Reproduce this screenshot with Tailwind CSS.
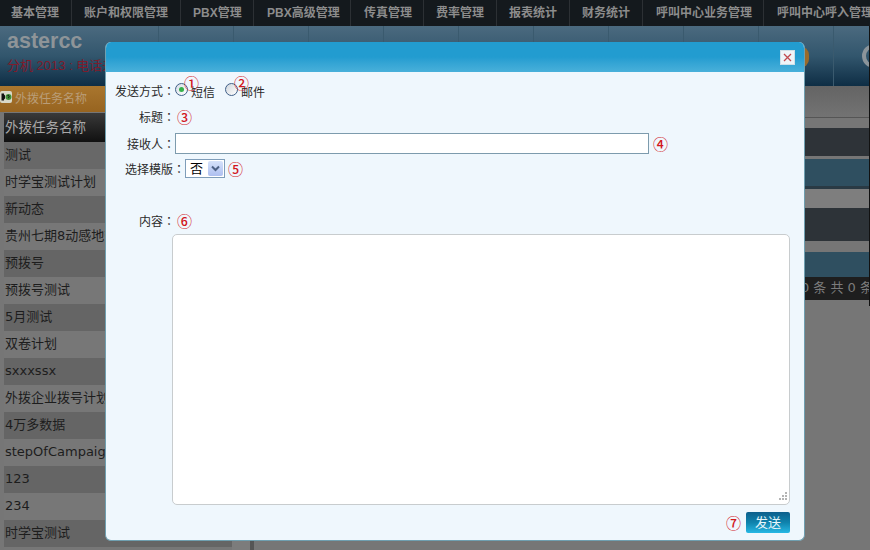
<!DOCTYPE html>
<html>
<head>
<meta charset="utf-8">
<script src="https://cdn.jsdelivr.net/npm/@tailwindcss/browser@4"></script>
</head>
<body class="m-0">
<div class="relative w-[870px] h-[550px] overflow-hidden bg-[#767676] font-['DejaVu_Sans','Noto_Sans_CJK_SC',sans-serif] text-[13px]">
  <!-- top nav -->
  <nav class="flex h-[26px] bg-[#14191d] text-[12px] font-bold text-[#8c8c8c] leading-[26px] whitespace-nowrap font-['Liberation_Sans','Noto_Sans_CJK_SC',sans-serif]">
    <div class="w-[72px] shrink-0 pl-[11px] border-r border-[#2c3034]">基本管理</div>
    <div class="w-[109px] shrink-0 pl-[12px] border-r border-[#2c3034]">账户和权限管理</div>
    <div class="w-[73px] shrink-0 pl-[12px] border-r border-[#2c3034]">PBX管理</div>
    <div class="w-[97px] shrink-0 pl-[13px] border-r border-[#2c3034]">PBX高级管理</div>
    <div class="w-[73px] shrink-0 pl-[13px] border-r border-[#2c3034]">传真管理</div>
    <div class="w-[73px] shrink-0 pl-[12px] border-r border-[#2c3034]">费率管理</div>
    <div class="w-[73px] shrink-0 pl-[12px] border-r border-[#2c3034]">报表统计</div>
    <div class="w-[73px] shrink-0 pl-[12px] border-r border-[#2c3034]">财务统计</div>
    <div class="w-[121px] shrink-0 pl-[13px] border-r border-[#2c3034]">呼叫中心业务管理</div>
    <div class="shrink-0 pl-[13px]">呼叫中心呼入管理</div>
  </nav>

  <!-- dimmed header -->
  <header class="relative flex h-[60px] bg-gradient-to-b from-[#4b6a7f] via-[#32566d] to-[#0e2e45]">
    <div class="w-[159px] shrink-0 pl-[7px] overflow-hidden whitespace-nowrap border-r border-[#3a5a6e] font-['Liberation_Sans','Noto_Sans_CJK_SC',sans-serif]">
      <div class="text-[21.500px] font-bold leading-[28px] mt-[1px] text-[#8e9498]">astercc</div>
      <div class="text-[13px] leading-[20px] mt-[1px] text-[#7e1c2c]">分机 2013 : 电话未注册</div>
    </div>
    <div class="w-[75px] shrink-0 border-r border-[#3a5a6e]"></div>
    <div class="w-[75px] shrink-0 border-r border-[#3a5a6e]"></div>
    <div class="w-[75px] shrink-0 border-r border-[#3a5a6e]"></div>
    <div class="w-[75px] shrink-0 border-r border-[#3a5a6e]"></div>
    <div class="w-[75px] shrink-0 border-r border-[#3a5a6e]"></div>
    <div class="w-[75px] shrink-0 border-r border-[#3a5a6e]"></div>
    <div class="w-[75px] shrink-0 border-r border-[#3a5a6e]"></div>
    <div class="w-[75px] shrink-0 border-r border-[#3a5a6e]"></div>
    <div class="w-[75px] shrink-0 border-r border-[#3a5a6e]"></div>
    <div class="absolute left-[800px] top-[20px] w-[9px] h-[22px] rounded-r-full bg-[#9a6a2a]"></div>
    <div class="absolute left-[862px] top-[18px] w-[24px] h-[24px] rounded-full border-[4px] border-[#8b949a]"></div>
  </header>

  <div class="flex items-start">
    <!-- left panel -->
    <aside class="w-[232px] shrink-0">
      <div class="flex items-center h-[26px] bg-gradient-to-b from-[#a9762e] to-[#976420] text-[12px] text-[#b99d78] pb-[1px]">
        <svg class="mr-[3px] mb-[3px] w-[12px] h-[12px]" viewBox="0 0 12 12"><rect x="0" y="0" width="12" height="12" rx="2" fill="#d8d8c8"/><path d="M1.5 2.5h2.5v7H1.500zM4 3.500l1 1v3l-1 1z" fill="#111"/><circle cx="8.500" cy="6" r="3" fill="#3f8f38"/><path d="M7.500 4.600a1 1 0 1 1 1.200 1.600v1" stroke="#111" fill="none"/></svg>
        <span>外拨任务名称</span>
      </div>
      <div class="ml-[4px] border-t-[1px] border-[#767676] text-[#1d1d1d] whitespace-nowrap overflow-hidden">
        <div class="h-[29px] leading-[29px] pl-[1px] bg-gradient-to-b from-[#3a3a3a] to-[#111] text-[#a8a8a8] text-[13.5px]">外拨任务名称</div>
        <div class="h-[27px] leading-[26px] pl-[1px] bg-[#686868]">测试</div>
        <div class="h-[27px] leading-[26px] pl-[1px] bg-[#777]">时学宝测试计划</div>
        <div class="h-[27px] leading-[26px] pl-[1px] bg-[#656565]">新动态</div>
        <div class="h-[27px] leading-[26px] pl-[1px] bg-[#777]">贵州七期8动感地带</div>
        <div class="h-[27px] leading-[26px] pl-[1px] bg-[#656565]">预拨号</div>
        <div class="h-[27px] leading-[26px] pl-[1px] bg-[#777]">预拨号测试</div>
        <div class="h-[27px] leading-[26px] pl-[1px] bg-[#656565]">5月测试</div>
        <div class="h-[27px] leading-[26px] pl-[1px] bg-[#777]">双卷计划</div>
        <div class="h-[27px] leading-[26px] pl-[1px] bg-[#656565]">sxxxssx</div>
        <div class="h-[27px] leading-[26px] pl-[1px] bg-[#777]">外拨企业拨号计划</div>
        <div class="h-[27px] leading-[26px] pl-[1px] bg-[#656565]">4万多数据</div>
        <div class="h-[27px] leading-[26px] pl-[1px] bg-[#777]">stepOfCampaign</div>
        <div class="h-[27px] leading-[26px] pl-[1px] bg-[#656565]">123</div>
        <div class="h-[27px] leading-[26px] pl-[1px] bg-[#777]">234</div>
        <div class="h-[27px] leading-[26px] pl-[1px] bg-[#656565]">时学宝测试</div>
        <div class="h-[27px] bg-[#777]"></div>
      </div>
    </aside>
    <!-- splitter -->
    <div class="w-[18px] h-[464px] shrink-0 bg-[#7c7c7c]"></div>
    <div class="w-[4px] h-[464px] shrink-0 bg-[#555]"></div>
    <!-- right content -->
    <main class="flex-1 min-w-0 h-[464px]">
      <div class="h-[32px] bg-gradient-to-b from-[#646464] to-[#737373] border-b border-[#555]"></div>
      <div class="h-[10px]"></div>
      <div class="h-[28px] bg-[#2e3338]"></div>
      <div class="h-[3px]"></div>
      <div class="h-[27px] bg-[#2f4f60]"></div>
      <div class="h-[3px] bg-[#2a3a44]"></div>
      <div class="h-[19px] bg-[#7e7e7e]"></div>
      <div class="h-[33px] bg-[#2d3338]"></div>
      <div class="h-[11px]"></div>
      <div class="h-[25px] bg-[#2f4f60]"></div>
      <div class="h-[23px] bg-[#1e1e1e] text-[13px] leading-[22px] text-[#7b7b7b] whitespace-nowrap overflow-hidden flex justify-end"><span class="shrink-0 -mr-[3px]">记录 0 到 0 条 共 0 条</span></div>
    </main>
  </div>

  <div class="absolute right-0 top-[26px] w-[1px] h-[280px] bg-[#111]"></div>

  <!-- modal -->
  <div class="absolute left-[105px] top-[42px] w-[700px] h-[499px] rounded-[6px] overflow-hidden bg-[#eff7fd] border-x border-b border-[#6f9fb0] text-[12px] text-[#2a2a2a] font-['Liberation_Sans','Noto_Sans_CJK_SC',sans-serif]">
    <div class="h-[30px] bg-gradient-to-b from-[#229cd0] from-50% to-[#48b0da] flex justify-end items-start pt-[8px] pr-[9px]">
      <div class="w-[15px] h-[15px] bg-[#eef4f8] border border-[#cfe0e8] flex items-center justify-center">
        <svg class="w-[9px] h-[9px]" viewBox="0 0 9 9"><path d="M1 1l7 7M8 1l-7 7" stroke="#c0484e" stroke-width="1.300"/></svg>
      </div>
    </div>

    <div class="flex items-center h-[27px] mt-[5px]">
      <div class="w-[69px] text-right whitespace-nowrap pt-[2px]">发送方式<span class="font-['Noto_Sans_CJK_TC',sans-serif]">：</span></div>
      <div class="relative flex items-center pt-[1px] w-[50px] shrink-0">
        <span class="w-[13px] h-[13px] -mt-[3px] rounded-full border border-[#3f5f88] bg-gradient-to-br from-[#d6dee6] to-white flex items-center justify-center"><span class="w-[5px] h-[5px] rounded-full bg-[#35b04a]"></span></span>
        <span class="ml-[3px] text-[12px] pt-[3px]">短信</span>
        <span class="absolute left-[9px] -top-[5px] text-[15px] leading-[16px] font-medium text-[#d2171d] font-['Noto_Sans_CJK_SC',sans-serif]">①</span>
      </div>
      <div class="relative flex items-center pt-[1px]">
        <span class="w-[13px] h-[13px] -mt-[3px] rounded-full border border-[#3f5f88] bg-gradient-to-br from-[#d0d6dc] to-white"></span>
        <span class="ml-[3px] text-[12px] pt-[3px]">邮件</span>
        <span class="absolute left-[9px] -top-[5px] text-[15px] leading-[16px] font-medium text-[#d2171d] font-['Noto_Sans_CJK_SC',sans-serif]">②</span>
      </div>
    </div>

    <div class="flex items-center h-[25px]">
      <div class="w-[69px] text-right whitespace-nowrap pt-[1px]">标题<span class="font-['Noto_Sans_CJK_TC',sans-serif]">：</span></div>
      <span class="ml-[2px] text-[15px] leading-[16px] font-medium text-[#d2171d] font-['Noto_Sans_CJK_SC',sans-serif]">③</span>
    </div>

    <div class="flex items-center h-[27px]">
      <div class="w-[69px] text-right whitespace-nowrap pt-[3px]">接收人<span class="font-['Noto_Sans_CJK_TC',sans-serif]">：</span></div>
      <input type="text" class="w-[474px] h-[21px] mt-[1px] bg-white border border-[#7d9bad] outline-none">
      <span class="ml-[4px] mt-[2px] text-[15px] leading-[16px] font-medium text-[#d2171d] font-['Noto_Sans_CJK_SC',sans-serif]">④</span>
    </div>

    <div class="flex items-center h-[25px]">
      <div class="w-[79px] text-right whitespace-nowrap pt-[2px]">选择模版<span class="font-['Noto_Sans_CJK_TC',sans-serif]">：</span></div>
      <div class="w-[40px] h-[19px] bg-white border border-[#7f9db9] flex items-center justify-between pl-[4px] pr-[1px] text-[13px] text-black">
        <span>否</span>
        <span class="w-[15px] h-[15px] rounded-[2px] bg-gradient-to-b from-[#d6e2fa] to-[#aebff0] flex items-center justify-center">
          <svg class="w-[9px] h-[7px]" viewBox="0 0 9 7"><path d="M1 1.500l3.500 3.500L8 1.500" fill="none" stroke="#4d6185" stroke-width="2"/></svg>
        </span>
      </div>
      <span class="ml-[3px] text-[15px] leading-[16px] font-medium text-[#d2171d] font-['Noto_Sans_CJK_SC',sans-serif]">⑤</span>
    </div>

    <div class="flex items-center h-[25px] mt-[27px]">
      <div class="w-[69px] text-right whitespace-nowrap pt-[2px]">内容<span class="font-['Noto_Sans_CJK_TC',sans-serif]">：</span></div>
      <span class="ml-[2px] text-[15px] leading-[16px] font-medium text-[#d2171d] font-['Noto_Sans_CJK_SC',sans-serif]">⑥</span>
    </div>

    <div class="relative ml-[66px] mt-[1px] w-[618px] h-[271px]">
      <textarea class="block w-full h-full bg-white border border-[#c8ccce] rounded-[5px] resize-none outline-none"></textarea>
      <svg class="absolute right-[2px] bottom-[3px] w-[10px] h-[10px]" viewBox="0 0 10 10" fill="#b4b4b4"><rect x="7" y="0" width="2" height="2"/><rect x="4" y="3" width="2" height="2"/><rect x="7" y="3" width="2" height="2"/><rect x="1" y="6" width="2" height="2"/><rect x="4" y="6" width="2" height="2"/><rect x="7" y="6" width="2" height="2"/></svg>
    </div>

    <div class="flex items-center justify-end mt-[7px] pr-[14px]">
      <span class="mr-[5px] text-[15px] leading-[16px] font-medium text-[#d2171d] font-['Noto_Sans_CJK_SC',sans-serif]">⑦</span>
      <button class="w-[44px] h-[21px] rounded-[2px] bg-gradient-to-b from-[#0d5f8c] via-[#0f83ad] to-[#27b8e4] text-[13px] leading-[20px] text-[#e8f6fb]">发送</button>
    </div>
  </div>
</div>
</body>
</html>
